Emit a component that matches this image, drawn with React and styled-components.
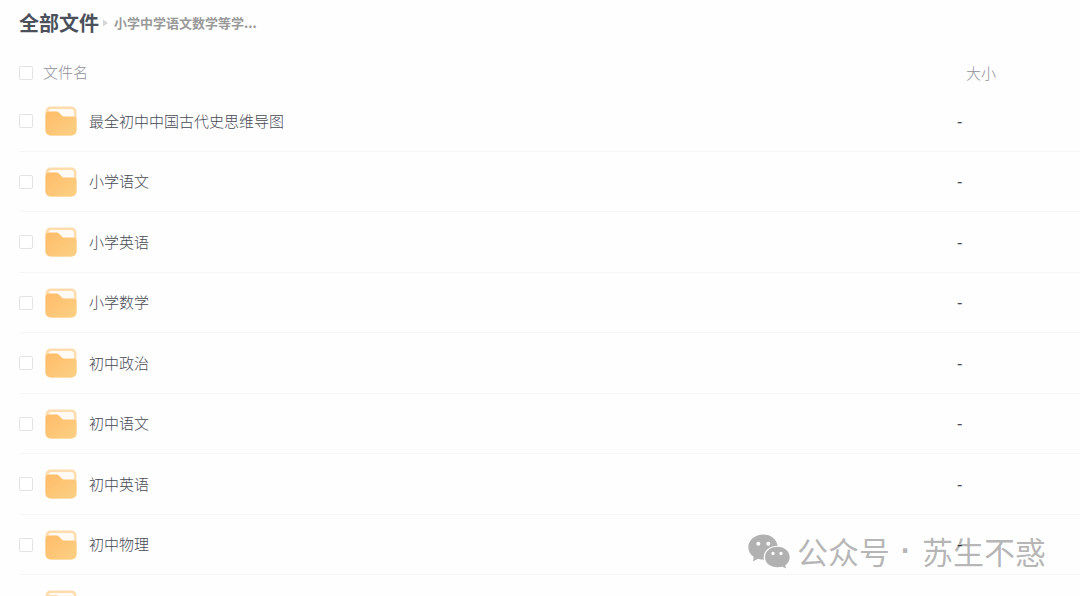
import React from "react";
import styled, { createGlobalStyle } from "styled-components";

const folders = [
  "最全初中中国古代史思维导图",
  "小学语文",
  "小学英语",
  "小学数学",
  "初中政治",
  "初中语文",
  "初中英语",
  "初中物理",
  "初中化学"
];

const FolderIcon = () => (
  <Folder viewBox="0 0 32 30" aria-hidden="true">
    <defs>
      <linearGradient id="front" x1="0" y1="0" x2="1" y2="1">
        <stop offset="0" stopColor="#ffbc69" />
        <stop offset="1" stopColor="#fbd083" />
      </linearGradient>
    </defs>
    <rect x="0.5" y="0.5" width="31" height="29" rx="5" fill="#ffdcae" />
    <path d="M3.500 6a3 3 0 0 1 3-3h19.500a3 3 0 0 1 3 3v8H3.500z" fill="#fffaf3" />
    <path
      d="M0.500 9.500a4 4 0 0 1 4-4h6.500c1.600 0 2.500.500 3.500 1.600l1.800 1.900c1 1.100 1.900 1.500 3.400 1.500h8.800a3 3 0 0 1 3 3V24.500a5 5 0 0 1-5 5h-21a5 5 0 0 1-5-5z"
      fill="url(#front)"
    />
  </Folder>
);

const WechatIcon = () => (
  <Wechat viewBox="0 0 126 104" aria-hidden="true">
    <path
      fillRule="evenodd"
      d="M46 1C21 1 1 18 1 39c0 12 6 22 16 29l-2 14 15-8c6 2 12 3 18 3-5-23 13-42 41-42C86 15 68 1 46 1zM31 23a6 6 0 1 1 0 12a6 6 0 0 1 0-12zM61 23a6 6 0 1 1 0 12a6 6 0 0 1 0-12z"
    />
    <path
      fillRule="evenodd"
      d="M88 38c21 0 37 14 37 31 0 10-5 18-13 24l2 10-12-6c-4 2-9 2-14 2-21 0-37-13-37-30s16-31 37-31zM75 53a5 5 0 1 0 0 10a5 5 0 0 0 0-10zM99 53a5 5 0 1 0 0 10a5 5 0 0 0 0-10z"
    />
  </Wechat>
);

const FileRow = ({ name }) => (
  <Row>
    <Cell>
      <NameBox>
        <Checkbox aria-label={name} />
        <FolderIcon />
        <FileName>{name}</FileName>
      </NameBox>
    </Cell>
    <SizeCell>-</SizeCell>
  </Row>
);

const App = () => (
  <Page>
    <GlobalStyle />
    <Breadcrumb>
      <RootLink href="#all">全部文件</RootLink>
      <Arrow viewBox="0 0 5 8" aria-hidden="true">
        <path d="M0 0.500L5 4L0 7.500z" />
      </Arrow>
      <Current>小学中学语文数学等学...</Current>
    </Breadcrumb>
    <Table>
      <thead>
        <tr>
          <HeadCell>
            <NameBox>
              <Checkbox id="select-all" />
              <HeadLabel htmlFor="select-all">文件名</HeadLabel>
            </NameBox>
          </HeadCell>
          <HeadCell $size>大小</HeadCell>
        </tr>
      </thead>
      <tbody>
        {folders.map(name => (
          <FileRow key={name} name={name} />
        ))}
      </tbody>
    </Table>
    <Watermark>
      <WechatIcon />
      <span>公众号</span>
      <Dot>·</Dot>
      <span>苏生不惑</span>
    </Watermark>
  </Page>
);

const GlobalStyle = createGlobalStyle`
  * {
    box-sizing: border-box;
  }

  body {
    margin: 0;
    background: #fefefe;
    color: #474a54;
    font-family: "Noto Sans CJK SC", sans-serif;
    font-size: 15px;
  }
`;

const Page = styled.main`
  position: relative;
  height: 100vh;
  overflow: hidden;
  padding-left: 19px;
`;

const Breadcrumb = styled.nav`
  display: flex;
  align-items: center;
  height: 46px;
  margin-bottom: 10px;
  padding-bottom: 2px;
`;

const RootLink = styled.a`
  color: #4b505b;
  font-size: 20px;
  font-weight: 700;
  text-decoration: none;
`;

const Arrow = styled.svg`
  width: 5px;
  height: 8px;
  margin: 2px 6px 0 4px;
  fill: #d6d6d8;
`;

const Current = styled.span`
  color: #999;
  font-size: 13px;
  font-weight: 700;
`;

const Table = styled.table`
  width: 100%;
  border-collapse: separate;
  border-spacing: 0;
  table-layout: fixed;
`;

const HeadCell = styled.th`
  width: ${props => (props.$size ? "123px" : "auto")};
  height: 35px;
  padding: 0 0 2px ${props => (props.$size ? "9px" : "0")};
  color: #8f9099;
  font-weight: 300;
  text-align: left;
`;

const HeadLabel = styled.label`
  margin-left: 10px;
  padding-bottom: 2px;
`;

const Row = styled.tr`
  height: 61px;

  &:nth-child(even) {
    height: 60px;
  }
`;

const Cell = styled.td`
  padding: 0;
  border-bottom: 1px solid #f5f5f6;
`;

const SizeCell = styled(Cell)`
  padding-bottom: 2px;
  font-weight: 500;
`;

const NameBox = styled.div`
  display: flex;
  align-items: center;
`;

const Checkbox = styled.input.attrs({ type: "checkbox" })`
  appearance: none;
  width: 14px;
  height: 14px;
  margin: 0;
  border: 1px solid #e2e3e5;
  border-radius: 2px;
  background: white;

  &:checked {
    background: #ffbc69;
  }
`;

const Folder = styled.svg`
  width: 32px;
  height: 30px;
  margin: 0 12px;
`;

const FileName = styled.span`
  padding-bottom: 2px;
  font-weight: 300;
`;

const Watermark = styled.div`
  position: absolute;
  right: 34px;
  bottom: 23px;
  display: flex;
  align-items: center;
  color: rgba(0, 0, 0, 0.3);
  font-size: 31px;
  line-height: 44px;
  pointer-events: none;
`;

const Wechat = styled.svg`
  width: 42px;
  height: 35px;
  margin-right: 7px;
  fill: currentColor;
`;

const Dot = styled.span`
  width: 32px;
  font-family: "Liberation Sans", sans-serif;
  font-weight: 700;
  text-align: center;
`;

export default App;
